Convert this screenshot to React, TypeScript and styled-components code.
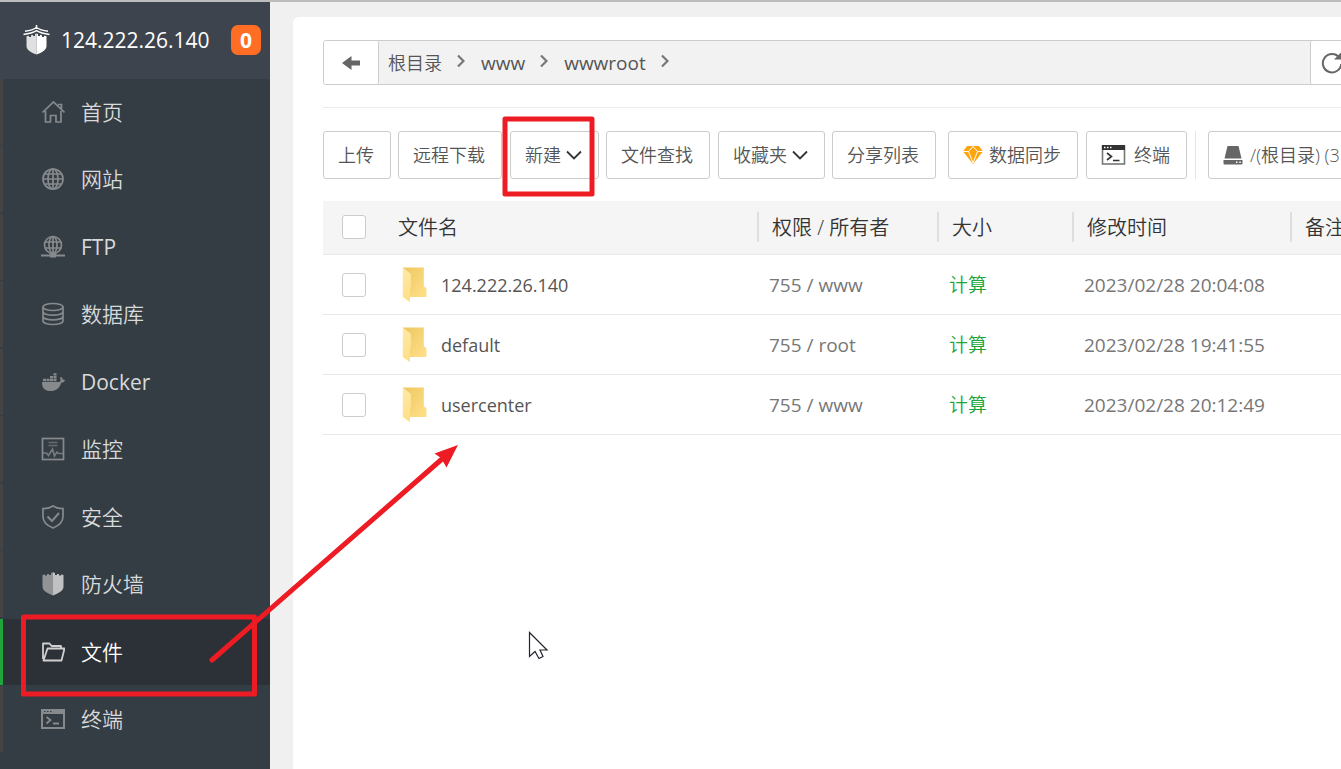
import React from "react";
import styled, { createGlobalStyle, css } from "styled-components";

const GlobalStyle = createGlobalStyle`
  *, *::before, *::after { box-sizing: border-box; }
  html, body { margin: 0; padding: 0; }
  body {
    background: #f0f0f0;
    color: #555;
    font-family: "Open Sans", "Noto Sans CJK SC", sans-serif;
    font-size: 18px;
    line-height: 24px;
    overflow: hidden;
  }
  a { color: inherit; text-decoration: none; }
  button { font: inherit; color: inherit; cursor: pointer; }
`;

const Shell = styled.div`
  position: relative;
  display: flex;
  min-height: 100vh;
  border-top: 2px solid #bdbdbd;
  overflow: hidden;
`;

/* ---------- sidebar ---------- */

const Sidebar = styled.aside`
  flex: 0 0 270px;
  background: #353d44;
`;

const Brand = styled.header`
  display: flex;
  align-items: center;
  height: 77px;
  padding: 0 9px 2px 23px;
  background: #3d444d;
  color: #fff;
  font-size: 21px;
`;

const BrandName = styled.a`
  flex: 1;
  margin-left: 11px;
`;

const Badge = styled.span`
  width: 30px;
  height: 30px;
  border-radius: 7px;
  background: #ff6e24;
  font-weight: 700;
  line-height: 30px;
  text-align: center;
`;

const Menu = styled.ul`
  margin: 0;
  padding: 0;
  list-style: none;
`;

const MenuItem = styled.li`
  margin-bottom: 1px;
  &:nth-child(even) { margin-bottom: 2px; }
`;

const MenuLink = styled.a<{ $active?: boolean; $latin?: boolean }>`
  display: flex;
  align-items: center;
  gap: 16px;
  height: 66px;
  padding-left: 38px;
  border-left: 3px solid #444;
  color: #d8dadb;
  font-size: 21px;
  font-weight: ${(p) => (p.$latin ? 400 : 350)};
  svg { color: #868a8d; }
  ${(p) =>
    p.$active &&
    css`
      border-left-color: #20a53a;
      background: #2c3037;
      color: #fff;
      svg { color: #cfcfcf; }
    `}
`;

/* ---------- main panel ---------- */

const Main = styled.main`
  flex: 1;
  display: flex;
  min-width: 0;
  overflow: hidden;
`;

const Panel = styled.section`
  flex: 1;
  min-width: 0;
  margin: 15px -12px 0 23px;
  padding: 23px 0 0 30px;
  border-radius: 6px 0 0 0;
  background: #fff;
`;

const AddressBar = styled.div`
  display: flex;
  height: 45px;
  border: 1px solid #ccc;
  border-radius: 3px;
  background: #f2f2f2;
`;

const BarButton = styled.button<{ $side: "left" | "right" }>`
  display: flex;
  align-items: center;
  justify-content: center;
  flex: none;
  width: ${(p) => (p.$side === "left" ? 55 : 42)}px;
  padding: 0;
  border: 0 solid #ccc;
  border-right-width: ${(p) => (p.$side === "left" ? 1 : 0)}px;
  border-left-width: ${(p) => (p.$side === "right" ? 1 : 0)}px;
  border-radius: 2px;
  background: #fff;
  color: #666;
`;

const Crumbs = styled.nav`
  flex: 1;
  display: flex;
  align-items: center;
  padding-left: 9px;
`;

const Crumb = styled.a<{ $latin?: boolean }>`
  display: flex;
  align-items: center;
  font-size: ${(p) => (p.$latin ? 19 : 18)}px;
  font-weight: ${(p) => (p.$latin ? 400 : 350)};
  svg { margin: 0 16px 4px 15px; color: #777; }
`;

const Toolbar = styled.div`
  display: flex;
  margin-top: 22px;
  padding: 23px 0 22px;
  border-top: 1px solid #ececec;
  white-space: nowrap;
`;

const ToolGroup = styled.div<{ $even?: boolean }>`
  display: flex;
  flex: none;
  gap: ${(p) => (p.$even ? 8 : 0)}px;
  margin-right: ${(p) => (p.$even ? 8 : 12)}px;
  ${(p) =>
    !p.$even &&
    css`
      > :nth-child(odd) { margin-right: 7px; }
      > :nth-child(even) { margin-right: 8px; }
      > :last-child { margin-right: 0; }
    `}
`;

const ToolButton = styled.button<{ $gap?: number }>`
  display: flex;
  align-items: center;
  flex: none;
  gap: ${(p) => p.$gap ?? 5}px;
  height: 48px;
  padding: 0 16px 0 14px;
  border: 1px solid #ccc;
  border-radius: 3px;
  background: #fff;
  font-weight: 350;
`;

const Divider = styled.span`
  flex: none;
  width: 1px;
  height: 48px;
  margin-right: 12px;
  background: #e4e4e4;
`;

const FileTable = styled.table`
  width: 100%;
  border-collapse: separate;
  border-spacing: 0;
  table-layout: fixed;
  white-space: nowrap;
`;

const HeadCell = styled.th<{ $width?: number; $rule?: boolean }>`
  width: ${(p) => (p.$width ? `${p.$width}px` : "auto")};
  height: 54px;
  padding: 0 0 0 15px;
  border-bottom: 1px solid #e8e8e8;
  background: ${(p) =>
    p.$rule
      ? "linear-gradient(#dedede, #dedede) 0 11px / 2px 30px no-repeat #f5f5f5"
      : "#f5f5f5"};
  color: #333;
  font-size: 20px;
  font-weight: 350;
  text-align: left;
`;

const Cell = styled.td`
  height: 60px;
  padding: 0 0 0 12px;
  border-bottom: 1px solid #e8e8e8;
  color: #777;
  font-size: 19px;
`;

const CheckCell = styled(Cell)`
  padding-left: 19px;
`;

const CheckHead = styled(HeadCell)`
  padding: 0 0 1px 19px;
`;

const Check = styled.input`
  display: block;
  appearance: none;
  width: 24px;
  height: 24px;
  margin: 0;
  border: 1px solid #ccc;
  border-radius: 3px;
  background: #fff;
`;

const FileLink = styled.a`
  display: flex;
  align-items: center;
  gap: 13px;
  padding-left: 7px;
  color: #555;
  font-size: 18px;
`;

const SizeButton = styled.button`
  padding: 0;
  border: 0;
  background: none;
  color: #20a53a;
  font-weight: 350;
`;

/* ---------- annotation marks over the page ---------- */

const Marks = styled.svg`
  position: absolute;
  top: -2px;
  left: 0;
  pointer-events: none;
`;

/* ---------- icons ---------- */

const Glyph = ({ children, w = 24, h = 24 }: { children: React.ReactNode; w?: number; h?: number }) => (
  <svg width={w} height={h} viewBox={`0 0 ${w} ${h}`} fill="none" stroke="currentColor" strokeWidth="1.7" aria-hidden="true">
    {children}
  </svg>
);

const LogoIcon = () => (
  <svg width="27" height="30" viewBox="0 0 27 30" aria-hidden="true">
    <path d="M13.5 0v4M2 6.200C7 5.600 11 4.300 13.500 2.500C16 4.300 20 5.600 25 6.200M.500 9.400C7 8.800 11 7.300 13.500 5.700C16 7.300 20 8.800 26.500 9.400" fill="none" stroke="#fff" strokeWidth="1.500" />
    <path d="M3.500 11.300L6 10.800v1.200h2V10.300l2-.5v1.200h2V9L13.500 8.600V29.500C8 27.500 3.500 25 3.500 21z" fill="#e0e0e0" />
    <path d="M23.500 11.300L21 10.800v1.200h-2V10.300l-2-.5v1.200h-2V9L13.500 8.600V29.500C19 27.500 23.500 25 23.500 21z" fill="#fff" />
  </svg>
);

const HomeIcon = () => (
  <Glyph>
    <path d="M1.500 12.500L12.500 2L23.500 12.500M4.500 11v11h5v-6.500h5.500V22h5V11M17 4.500h3.500v4" />
  </Glyph>
);

const GlobeIcon = () => (
  <Glyph>
    <circle cx="12" cy="12" r="10" />
    <ellipse cx="12" cy="12" rx="5" ry="10" />
    <path d="M12 2v20M2 12h20M4 7h16M4 17h16" />
  </Glyph>
);

const FtpIcon = () => (
  <Glyph>
    <circle cx="12" cy="10" r="8.500" />
    <ellipse cx="12" cy="10" rx="4" ry="8.500" />
    <path d="M12 2v18M4 7h16M4 13h16" />
    <path d="M0 20.500h24" strokeWidth="2" />
    <path d="M9 20.500h6" strokeWidth="4" />
  </Glyph>
);

const DatabaseIcon = () => (
  <Glyph>
    <ellipse cx="12" cy="5" rx="10" ry="3.500" />
    <path d="M2 5v14c0 2 4.500 3.500 10 3.500S22 21 22 19V5M2 9.700c0 2 4.500 3.500 10 3.500s10-1.500 10-3.500M2 14.400c0 2 4.500 3.500 10 3.500s10-1.500 10-3.500" />
  </Glyph>
);

const DockerIcon = () => (
  <Glyph>
    <g fill="currentColor" stroke="none">
      <path d="M1 12h17.500c1-.6 1.200-1.500 1-2.500l-.5-1.500 1-1.200c1 .8 1.600 1.600 1.700 2.700 1 0 1.800.2 2.300.6-.5 1.800-1.800 2.600-3.800 2.600C18.500 18.500 15 21 9.500 21 4 21 1 18.500 1 12z" />
      <path d="M2 8.800h3v2.500H2zM5.500 8.800h3v2.500h-3zM9 8.800h3v2.500H9zM12.500 8.800h3v2.500h-3zM9 6h3v2.200H9zM12.500 6h3v2.200h-3zM12.500 3.200h3v2.200h-3z" />
    </g>
  </Glyph>
);

const MonitorIcon = () => (
  <Glyph>
    <rect x="1.500" y="1.500" width="21" height="21" />
    <path d="M7.500 5.500h9M7.500 8.500h9" opacity=".6" />
    <path d="M2 16h3.500l2 2.500 4-6.500 2 7 2.500-4 1.500 1.500H22" opacity=".8" />
  </Glyph>
);

const ShieldCheckIcon = () => (
  <Glyph>
    <path d="M12 1C9 3 5.500 3.700 2 3.500V11.500C2 17 6 20.500 12 23C18 20.500 22 17 22 11.500V3.500C18.500 3.700 15 3 12 1z" />
    <path d="M6.500 11.500l4.500 4.500 7-8" strokeWidth="2" />
  </Glyph>
);

const FirewallIcon = () => (
  <Glyph>
    <path d="M1.500 3L4 2.500v1h2V2h2v1h2V1L12 .3V23.500C5.500 21 1.500 18.500 1.500 14.500z" fill="#919395" stroke="none" />
    <path d="M22.500 3L20 2.500v1h-2V2h-2v1h-2V1L12 .3V23.500C18.500 21 22.500 18.500 22.500 14.500z" fill="#c0c1c2" stroke="none" />
  </Glyph>
);

const FolderIcon = () => (
  <Glyph>
    <path d="M2 19V3.500h6.500l2 2.500H20v2.500M2.500 20.500L6.500 8.500H23.500L20.500 20.500z" strokeWidth="1.800" strokeLinejoin="round" />
  </Glyph>
);

const SideTerminalIcon = () => (
  <Glyph>
    <rect x="1" y="3" width="22" height="18" strokeWidth="2" />
    <path d="M1 5h22" strokeWidth="4" />
    <path d="M5.500 10l4 3-4 3.500M12 16.500h6" strokeWidth="1.800" />
    <path d="M3 4.500h1.500M6 4.500h1.500M9 4.500h1.500" stroke="#353d44" strokeWidth="1" />
  </Glyph>
);

const BackIcon = () => (
  <svg width="18" height="14" viewBox="0 0 18 14" fill="currentColor" aria-hidden="true">
    <path d="M0 7L9.500 0v4.500H18v5H9.500V14z" />
  </svg>
);

const CrumbArrow = () => (
  <svg width="8" height="14" viewBox="0 0 8 14" fill="none" stroke="currentColor" strokeWidth="2.200" aria-hidden="true">
    <path d="M1 1.500L6.500 7L1 12.500" />
  </svg>
);

const RefreshIcon = () => (
  <svg width="22" height="22" viewBox="0 0 22 22" fill="none" stroke="currentColor" strokeWidth="2" aria-hidden="true">
    <path d="M18.500 5.800A9.200 9.200 0 1 0 20.200 12" />
    <path d="M20 .5v7h-7z" fill="currentColor" stroke="none" />
  </svg>
);

const CaretIcon = () => (
  <svg width="16" height="10" viewBox="0 0 16 10" fill="none" stroke="#333" strokeWidth="1.800" aria-hidden="true">
    <path d="M1 1.500L8 8.500L15 1.500" />
  </svg>
);

const DiamondIcon = () => (
  <svg width="20" height="18" viewBox="0 0 20 18" aria-hidden="true">
    <path d="M4 0h12l4 5.500L10 18L0 5.500z" fill="#ffa40d" />
    <path d="M0 5.500h5.500L10 17L14.500 5.500H20M5.500 5.500L10 .5l4.500 5" fill="none" stroke="#fff" strokeWidth="1" />
  </svg>
);

const TerminalIcon = () => (
  <svg width="25" height="20" viewBox="0 0 25 20" fill="none" aria-hidden="true">
    <rect x="1.500" y="1" width="22" height="18" stroke="#777" strokeWidth="1.600" />
    <path d="M1 0h23v5H1z" fill="#333" />
    <path d="M3 2.500h1.500M6 2.500h1.500M9 2.500h1.500" stroke="#fff" strokeWidth="1.500" />
    <path d="M6 8l4.500 3.500L6 15M12 15.500h6.500" stroke="#333" strokeWidth="1.600" />
  </svg>
);

const DiskIcon = () => (
  <svg width="20" height="20" viewBox="0 0 20 20" aria-hidden="true">
    <path d="M4.500 1h11l3 12.500h-17z" fill="#666" />
    <path d="M.5 15h19v3.500q0 1-1 1h-17q-1 0-1-1z" fill="#666" />
    <path d="M13 17.200h1.500M16.300 17.200h1.500" stroke="#fff" strokeWidth="1.500" />
  </svg>
);

const YellowFolder = () => (
  <svg width="26" height="38" viewBox="0 0 26 38" aria-hidden="true">
    <defs>
      <linearGradient id="folderBack" x1="0" y1="0" x2="1" y2="1">
        <stop offset="0" stopColor="#edc75f" />
        <stop offset="1" stopColor="#ffe08a" />
      </linearGradient>
      <linearGradient id="folderFront" x1="0" y1="0" x2="0" y2="1">
        <stop offset="0" stopColor="#ffe9a6" />
        <stop offset="1" stopColor="#ffdf85" />
      </linearGradient>
    </defs>
    <path d="M.8 1.500H21.800V20L24.500 22.500V31H6z" fill="url(#folderBack)" />
    <path d="M.8 1.500L8.800 8V21.500L8 23V36.200L.8 31z" fill="url(#folderFront)" />
  </svg>
);

/* ---------- data ---------- */

const menu = [
  { label: "首页", Icon: HomeIcon },
  { label: "网站", Icon: GlobeIcon },
  { label: "FTP", Icon: FtpIcon, latin: true },
  { label: "数据库", Icon: DatabaseIcon },
  { label: "Docker", Icon: DockerIcon, latin: true },
  { label: "监控", Icon: MonitorIcon },
  { label: "安全", Icon: ShieldCheckIcon },
  { label: "防火墙", Icon: FirewallIcon },
  { label: "文件", Icon: FolderIcon, active: true },
  { label: "终端", Icon: SideTerminalIcon },
];

const crumbs = [
  { label: "根目录" },
  { label: "www", latin: true },
  { label: "wwwroot", latin: true },
];

const tools = [
  { label: "上传" },
  { label: "远程下载" },
  { label: "新建", caret: true },
  { label: "文件查找" },
  { label: "收藏夹", caret: true },
  { label: "分享列表" },
];

const files = [
  { name: "124.222.26.140", owner: "755 / www", time: "2023/02/28 20:04:08" },
  { name: "default", owner: "755 / root", time: "2023/02/28 19:41:55" },
  { name: "usercenter", owner: "755 / www", time: "2023/02/28 20:12:49" },
];

export default function App() {
  return (
    <>
      <GlobalStyle />
      <Shell>
        <Sidebar>
          <Brand>
            <LogoIcon />
            <BrandName href="#">124.222.26.140</BrandName>
            <Badge>0</Badge>
          </Brand>
          <nav>
            <Menu>
              {menu.map(({ label, Icon, active, latin }) => (
                <MenuItem key={label}>
                  <MenuLink href="#" $active={active} $latin={latin}>
                    <Icon />
                    {label}
                  </MenuLink>
                </MenuItem>
              ))}
            </Menu>
          </nav>
        </Sidebar>

        <Main>
          <Panel>
            <AddressBar>
              <BarButton $side="left" aria-label="后退">
                <BackIcon />
              </BarButton>
              <Crumbs>
                {crumbs.map((c) => (
                  <Crumb key={c.label} href="#" $latin={c.latin}>
                    {c.label}
                    <CrumbArrow />
                  </Crumb>
                ))}
              </Crumbs>
              <BarButton $side="right" aria-label="刷新">
                <RefreshIcon />
              </BarButton>
            </AddressBar>

            <Toolbar>
              <ToolGroup>
                {tools.map((t) => (
                  <ToolButton key={t.label}>
                    {t.label}
                    {t.caret && <CaretIcon />}
                  </ToolButton>
                ))}
              </ToolGroup>
              <ToolGroup $even>
                <ToolButton $gap={6}>
                  <DiamondIcon />
                  数据同步
                </ToolButton>
                <ToolButton $gap={8}>
                  <TerminalIcon />
                  终端
                </ToolButton>
              </ToolGroup>
              <Divider />
              <ToolButton $gap={7}>
                <DiskIcon />
                /(根目录) (3
              </ToolButton>
            </Toolbar>

            <FileTable>
              <thead>
                <tr>
                  <CheckHead $width={60}>
                    <Check type="checkbox" aria-label="全选" />
                  </CheckHead>
                  <HeadCell>文件名</HeadCell>
                  <HeadCell $width={180} $rule>权限 / 所有者</HeadCell>
                  <HeadCell $width={135} $rule>大小</HeadCell>
                  <HeadCell $width={218} $rule>修改时间</HeadCell>
                  <HeadCell $width={63} $rule>备注</HeadCell>
                </tr>
              </thead>
              <tbody>
                {files.map((f) => (
                  <tr key={f.name}>
                    <CheckCell>
                      <Check type="checkbox" aria-label={f.name} />
                    </CheckCell>
                    <Cell>
                      <FileLink href="#">
                        <YellowFolder />
                        {f.name}
                      </FileLink>
                    </Cell>
                    <Cell>{f.owner}</Cell>
                    <Cell>
                      <SizeButton>计算</SizeButton>
                    </Cell>
                    <Cell>{f.time}</Cell>
                    <Cell />
                  </tr>
                ))}
              </tbody>
            </FileTable>
          </Panel>
        </Main>

        <Marks width="620" height="710" viewBox="0 0 620 710" fill="none" aria-hidden="true">
          <g stroke="#ed1c24" strokeWidth="5" strokeLinejoin="round" strokeLinecap="round">
            <rect x="505" y="119" width="87" height="75" />
            <rect x="23.500" y="617" width="231" height="77" />
            <path d="M212 660L442 459" />
          </g>
          <path d="M458 445L434.500 453.500L441 458L446.500 467.500z" fill="#ed1c24" />
          <path d="M529.500 632.500V656.500L535 651.500L539 658.500L543 656.500L540 650H547z" fill="#fff" stroke="#222230" strokeWidth="1.200" />
        </Marks>
      </Shell>
    </>
  );
}
